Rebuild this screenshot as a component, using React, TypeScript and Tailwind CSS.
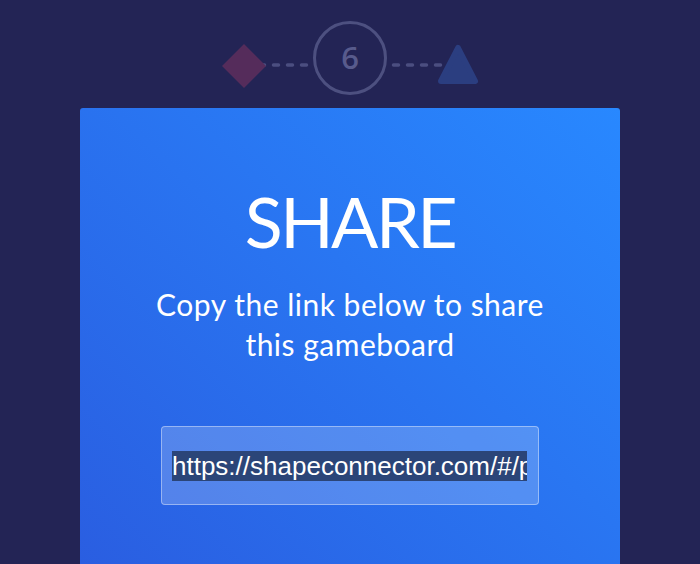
import React from "react";

export default function App() {
  return (
    <div className="w-[700px] h-[564px] overflow-hidden bg-[#232455] flex flex-col items-center" style={{ fontFamily: "Lato, 'Open Sans', sans-serif" }}>
      <div className="pt-[20px] h-[108px] flex justify-center">
        <svg width="280" height="88" viewBox="0 0 280 88">
          <line x1="49.5" y1="45" x2="100" y2="45" stroke="#4b4e80" strokeWidth="3.5" strokeLinecap="round" strokeDasharray="5 9" />
          <line x1="183.5" y1="45" x2="235" y2="45" stroke="#4b4e80" strokeWidth="3.5" strokeLinecap="round" strokeDasharray="5 9" />
          <polygon points="34,24 56,46 34,68 12,46" fill="#552c5b" />
          <polygon points="248,28 265,61 231,61" fill="#2b3e80" stroke="#2b3e80" strokeWidth="6" strokeLinejoin="round" />
          <circle cx="140" cy="38" r="35.5" fill="none" stroke="#4d5080" strokeWidth="3" />
          <text x="140" y="49" textAnchor="middle" fontSize="31" fontWeight="600" fill="#585b8c" fontFamily="'Open Sans', sans-serif">6</text>
        </svg>
      </div>
      <div className="w-[540px] h-[520px] shrink-0 rounded-[3px] bg-linear-to-tr from-[#2a5bdf] to-[#2888ff] flex flex-col items-center text-white">
        <h1 className="mt-[73px] text-[70px] leading-[80px] font-normal tracking-[-2.5px]">SHARE</h1>
        <p className="mt-[23px] text-[30px] leading-[40px] text-center w-[410px] tracking-[0.5px]">Copy the link below to share this gameboard</p>
        <div className="mt-[62px] w-[378px] h-[79px] rounded-[4px] border-[1.5px] border-white/40 bg-white/20 flex items-center px-[10px]">
          <div className="w-[355px] overflow-hidden whitespace-nowrap">
            <span className="bg-[#2b4578] text-[26px] leading-[30px] inline-block text-white" style={{ fontFamily: "'Liberation Sans', Arial, sans-serif" }}>
              https://shapeconnector.com/#/play/x8f2k
            </span>
          </div>
        </div>
      </div>
    </div>
  );
}
